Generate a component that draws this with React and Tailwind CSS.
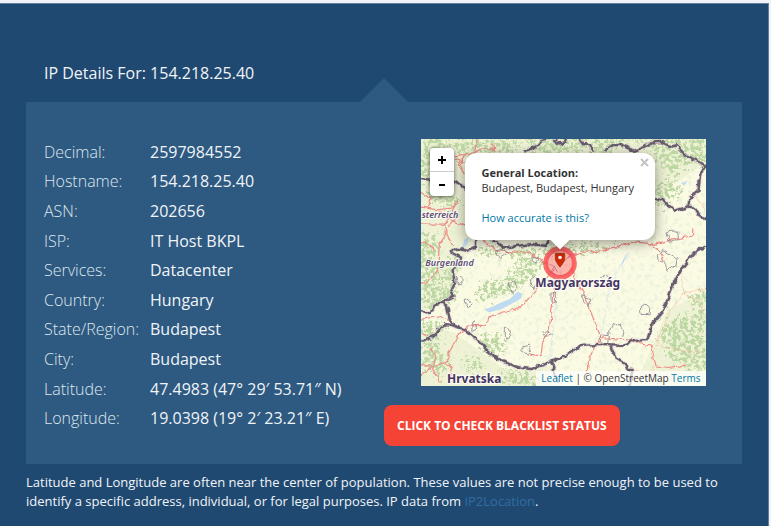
const details = [
  ["Decimal:", "2597984552"],
  ["Hostname:", "154.218.25.40"],
  ["ASN:", "202656"],
  ["ISP:", "IT Host BKPL"],
  ["Services:", "Datacenter"],
  ["Country:", "Hungary"],
  ["State/Region:", "Budapest"],
  ["City:", "Budapest"],
  ["Latitude:", "47.4983 (47° 29′ 53.71″ N)"],
  ["Longitude:", "19.0398 (19° 2′ 23.21″ E)"],
];

const forests = [
  "M0 9H60L90 40L50 90L70 140L20 150L0 120Z",
  "M90 9H300L280 52H140L120 90L100 30Z",
  "M300 9H510L480 52H330Z",
  "M510 9H640L600 30L560 52H510Z",
  "M640 9H855V90L800 80L770 130L720 90L705 60L680 40Z",
  "M705 150L740 130L780 160L740 200L705 220Z",
  "M0 290L40 300L60 340L30 370L70 400L60 430L10 440L0 400Z",
  "M0 430L60 440L80 490L30 520L0 500Z",
  "M40 150L120 190L100 220L20 190Z",
  "M160 330L240 325L260 350L200 360Z",
  "M190 440L240 430L290 390L340 370L370 380L330 430L270 470L200 490L160 480Z",
  "M270 340L380 330L400 350L330 370L290 380Z",
  "M200 590L240 600L260 640L220 660L180 640L180 600Z",
  "M0 610L60 600L50 640L90 680L60 720L0 690Z",
  "M120 690L160 660L190 690L170 710Z",
  "M440 325L540 320L560 340L480 350L450 345Z",
  "M240 700L300 710L360 720L350 750H250Z",
  "M730 560L800 540L855 530V710L790 690L740 660L740 620L710 600Z",
  "M800 480L855 460V540L830 520Z",
  "M0 560L50 550L80 580L40 600L0 600Z",
  "M100 350L120 380L100 420L110 460L85 500L60 480L70 420Z",
];

const motorways = [
  "M0 214L50 222L100 215M0 240L60 228L85 250L140 275L180 310L230 345L330 353L380 385",
  "M80 250L75 290L95 330M0 265L75 265L110 190M110 240L85 270M80 290L55 325L50 400L20 440L0 442",
  "M105 60L160 50L180 40H225M225 45L215 25M130 60L115 90L130 115M160 50L170 9M105 70L130 80",
  "M0 550L60 542L95 560M0 590L20 600M150 570L195 568L200 545L240 530L300 515L330 480L400 400",
  "M150 570L115 590L90 640L75 680L95 700L85 730M0 690L40 690L75 680M30 640L45 660L35 700L60 740M0 720L30 695",
  "M400 430L398 480L385 580L365 620L360 660L325 655",
  "M450 400L490 480L540 605L505 660L498 710M540 605L620 612L690 628L705 690L740 695L795 688",
  "M440 365L480 350L540 345L640 318L700 325L740 315L815 300V278M690 325L720 350L730 380",
  "M0 170L30 190L20 215M0 320L35 330L40 345",
];

const borders = [
  "M0 127L35 133L40 150M70 130L105 140L140 158",
  "M310 48L345 35L365 12L380 9M403 9V24L430 20L435 9M475 9L485 25H508L512 50",
  "M550 45L575 28L600 28L640 45L665 35L690 20L720 18L750 32L765 28L800 65L855 88L838 115L832 165L805 185L803 210",
  "M705 187L730 195L760 225L803 212L820 215L835 240L855 248",
  "M165 311V335L140 345L105 338L90 350L120 365L118 380L95 400L100 440L90 460L98 480L60 500L40 510L30 528L0 530",
  "M60 500L78 510L85 545L98 570L130 580L165 610L195 640L225 665L280 692L330 700L370 685L395 675L430 662L480 630L545 627L600 630L620 625L640 612L680 610L690 570L725 530L740 490L760 440L780 400L800 375L835 340L855 332",
  "M0 615L40 600L55 580L75 565L98 570M215 311L250 335L330 325L375 330L385 311",
  "M390 675L400 690L398 705L408 740M568 632L585 665L610 680L618 702H635L625 750",
];

const towns = [
  "M105 422H123V442L108 445Z",
  "M265 440L280 435L288 455L278 472L265 462Z",
  "M132 495L145 490L150 508L138 515Z",
  "M152 560L162 555L167 580L153 587Z",
  "M250 578L265 576L270 598L258 610L250 598Z",
  "M303 630L325 625L330 645L318 657L302 650Z",
  "M228 345L240 338L262 350L240 365L226 358Z",
  "M658 512L672 502L686 515L684 536L660 536Z",
  "M738 288L770 285L773 312L745 320Z",
  "M712 358L725 342L745 355L768 370L765 390L738 403L730 380L715 375Z",
  "M330 430L345 420L350 440L340 460L328 448Z",
  "M390 475L405 473L402 500L390 495Z",
  "M365 590L380 584L395 597L375 602Z",
  "M482 480L510 488L500 512L485 495Z",
  "M565 585L575 565L600 563L608 590L605 600M565 585L560 600",
  "M538 425L553 415L567 428",
  "M537 605L545 597L562 600L560 625L540 622Z",
  "M335 362L350 365L345 382L333 375Z",
  "M572 315L582 325L590 312",
];

function CountryMap() {
  return (
    <svg
      viewBox="0 9 855 742"
      preserveAspectRatio="xMidYMid slice"
      className="absolute inset-0 h-full w-full"
      role="img"
      aria-label="Map of Hungary"
    >
      <defs>
        <filter id="ragged" x="-5%" y="-5%" width="110%" height="110%">
          <feTurbulence type="fractalNoise" baseFrequency="0.09" numOctaves="4" seed="4" result="n" />
          <feDisplacementMap in="SourceGraphic" in2="n" scale="75" xChannelSelector="R" yChannelSelector="G" result="d" />
          <feColorMatrix in="n" type="matrix" values="0 0 0 0 0  0 0 0 0 0  0 0 0 0 0  0 0 7 0 -2.9" result="m" />
          <feComposite in="d" in2="m" operator="in" />
        </filter>
        <filter id="speckle" x="0" y="0" width="100%" height="100%">
          <feTurbulence type="fractalNoise" baseFrequency="0.07" numOctaves="5" seed="11" />
          <feColorMatrix type="matrix" values="0 0 0 0 0.77  0 0 0 0 0.86  0 0 0 0 0.66  0 9 0 0 -5" />
        </filter>
        <filter id="wobble" x="-5%" y="-5%" width="110%" height="110%">
          <feTurbulence type="fractalNoise" baseFrequency="0.05" numOctaves="2" seed="7" />
          <feDisplacementMap in="SourceGraphic" scale="16" xChannelSelector="R" yChannelSelector="G" />
        </filter>
      </defs>
      <rect y="9" width="855" height="742" fill="#fbfae3" />
      <path d="M0 9H855V80L705 180V310H150L80 500L0 530ZM0 570L100 590L250 700L400 690V751H0ZM740 520L855 470V751H640L700 620Z" fill="#eff2d5" />
      <rect y="9" width="855" height="742" filter="url(#speckle)" opacity="0.5" />
      <g fill="#bdd7a2" filter="url(#ragged)">
        {forests.map((d) => (
          <path key={d} d={d} />
        ))}
      </g>
      <g fill="#bfdbf2">
        <path d="M190 522L215 512L240 500L265 490L290 468L304 474L300 488L270 505L240 520L205 530Z" />
        <path d="M130 310L143 306L138 325L122 342Z" />
        <path d="M620 350L610 375L600 395L606 372ZM780 142L800 135L790 150Z" />
      </g>
      <g fill="none" stroke="#cfe2ee" strokeWidth="2" filter="url(#wobble)">
        <path d="M420 400L405 470L400 560L385 680M625 350L590 400L560 480L540 600M640 60L620 90" />
      </g>
      <g fill="none" stroke="#f7b79c" strokeWidth="2" opacity="0.8" filter="url(#wobble)">
        <path d="M855 460L790 470L750 520L715 600L700 640M700 625L760 640L855 655M790 470L780 420M800 200L820 170L855 230M630 700L690 720L700 690M780 475L830 490L850 540" />
      </g>
      <g fill="none" stroke="#ef8a86" strokeWidth="3.5" filter="url(#wobble)">
        {motorways.map((d) => (
          <path key={d} d={d} />
        ))}
      </g>
      <g fill="none" stroke="#8c8791" strokeWidth="2.5" filter="url(#wobble)">
        {towns.map((d) => (
          <path key={d} d={d} />
        ))}
      </g>
      <g fill="none" stroke="#c9bfc9" strokeWidth="12" opacity="0.5" strokeLinejoin="round" filter="url(#wobble)">
        {borders.map((d) => (
          <path key={d} d={d} />
        ))}
      </g>
      <g fill="none" stroke="#675b6d" strokeWidth="7" strokeLinejoin="round" filter="url(#wobble)">
        {borders.map((d) => (
          <path key={d} d={d} />
        ))}
      </g>
      <circle cx="417" cy="382" r="43" fill="#ff3344" fillOpacity="0.35" stroke="#f8484d" strokeOpacity="0.8" strokeWidth="15" />
      <path d="M385 385L400 392L410 410M400 392L390 408L402 415M430 375L445 362" fill="none" stroke="#a0456a" strokeWidth="2.5" opacity="0.6" />
      <path d="M403 352H431V370Q431 376 417 394Q403 376 403 370Z" fill="#cc2b06" stroke="#a02404" strokeWidth="2" />
      <circle cx="417" cy="365" r="5.5" fill="#fff" />
      <g
        fill="#463660"
        stroke="#fff"
        strokeOpacity="0.75"
        strokeWidth="7"
        strokeLinejoin="round"
        paintOrder="stroke"
        fontFamily="'Noto Sans', sans-serif"
        fontWeight="700"
      >
        <text x="343" y="455" fontSize="36">Magyarország</text>
        <text x="78" y="743" fontSize="36">Hrvatska</text>
        <g fontStyle="italic" fontSize="27" fill="#5d5070" fontWeight="600">
          <text x="2" y="247">sterreich</text>
          <text x="13" y="392">Burgenland</text>
        </g>
      </g>
    </svg>
  );
}

function LocationMap() {
  return (
    <div className="relative mx-auto h-[247px] w-[285px] overflow-hidden font-['Open_Sans',sans-serif] text-[11px] text-[#333]">
      <CountryMap />
      <div className="absolute top-[9px] left-[9px] flex w-6 flex-col overflow-hidden rounded-sm bg-white shadow-[0_1px_5px_rgba(0,0,0,0.65)]">
        <button aria-label="Zoom in" className="flex h-6 items-center justify-center border-b border-[#ccc] text-black">
          <svg viewBox="0 0 10 10" className="h-[10px] w-[10px]"><path d="M5 1V9M1 5H9" stroke="currentColor" strokeWidth="2" /></svg>
        </button>
        <button aria-label="Zoom out" className="flex h-6 items-center justify-center text-black">
          <svg viewBox="0 0 10 10" className="h-[10px] w-[10px]"><path d="M2 6H8" stroke="currentColor" strokeWidth="2" /></svg>
        </button>
      </div>
      <div className="absolute top-[14px] left-[44px] w-[190px]">
        <div className="absolute bottom-[-6px] left-[87px] h-4 w-4 rotate-45 bg-white shadow-[0_3px_14px_rgba(0,0,0,0.4)]" />
        <div className="relative h-[87px] rounded-xl bg-white px-[17px] pt-[12px] leading-[15px] shadow-[0_3px_14px_rgba(0,0,0,0.4)]">
          <p className="whitespace-nowrap"><b>General Location:</b><br />Budapest, Budapest, Hungary</p>
          <a href="#accuracy" className="mt-[15px] block text-[#0078a8]">How accurate is this?</a>
          <button aria-label="Close" className="absolute top-[5px] right-[6px] text-[#c3c3c3]">
            <svg viewBox="0 0 9 9" className="h-[9px] w-[9px]"><path d="M1 1L8 8M8 1L1 8" stroke="currentColor" strokeWidth="2" /></svg>
          </button>
        </div>
        <div className="absolute bottom-[-6px] left-[87px] h-4 w-4 rotate-45 bg-white" />
      </div>
      <div className="absolute right-0 bottom-0 bg-white/70 px-[5px] text-[10px] leading-[15px] whitespace-nowrap">
        <a href="#leaflet" className="text-[#0078a8]">Leaflet</a> | © OpenStreetMap <a href="#terms" className="text-[#0078a8]">Terms</a>
      </div>
    </div>
  );
}

export default function App() {
  return (
    <div className="min-h-screen bg-[#f1f3f6] pt-[3px] pr-[2px] font-['Open_Sans','Noto_Sans',sans-serif] text-[#f0f4f8]">
      <main className="min-h-[523px] border-t border-r border-[#5f7fa3] bg-[#204971] px-[26px] pt-[57px] pb-3">
        <h1 className="mb-[17px] px-[18px] text-base leading-6">IP Details For: 154.218.25.40</h1>
        <section className="relative grid grid-cols-2 bg-[#2e5980] pt-[35px] pb-[18px]">
          <svg viewBox="0 0 48 24" className="absolute bottom-full left-1/2 h-6 w-12 -translate-x-1/2" aria-hidden="true">
            <path d="M0 24L24 0L48 24Z" fill="#2e5980" />
          </svg>
          <dl className="grid h-[296px] grid-rows-10 pl-[18px] text-base">
            {details.map(([label, value]) => (
              <div key={label} className="flex items-center leading-6">
                <dt className="w-[106px] font-light text-[#dfe8f0]">{label}</dt>
                <dd>{value}</dd>
              </div>
            ))}
          </dl>
          <div className="pt-[2px]">
            <LocationMap />
            <button className="mt-[19px] h-[41px] rounded-lg bg-[#f54336] px-[13px] text-xs font-bold text-white">
              CLICK TO CHECK BLACKLIST STATUS
            </button>
          </div>
        </section>
        <p className="pt-[9px] text-[13px] leading-[19px]">
          Latitude and Longitude are often near the center of population. These values are not precise enough to be used to
          identify a specific address, individual, or for legal purposes. IP data from{" "}
          <a href="#ip2location" className="text-[#2e6da4]">IP2Location</a>.
        </p>
      </main>
    </div>
  );
}
